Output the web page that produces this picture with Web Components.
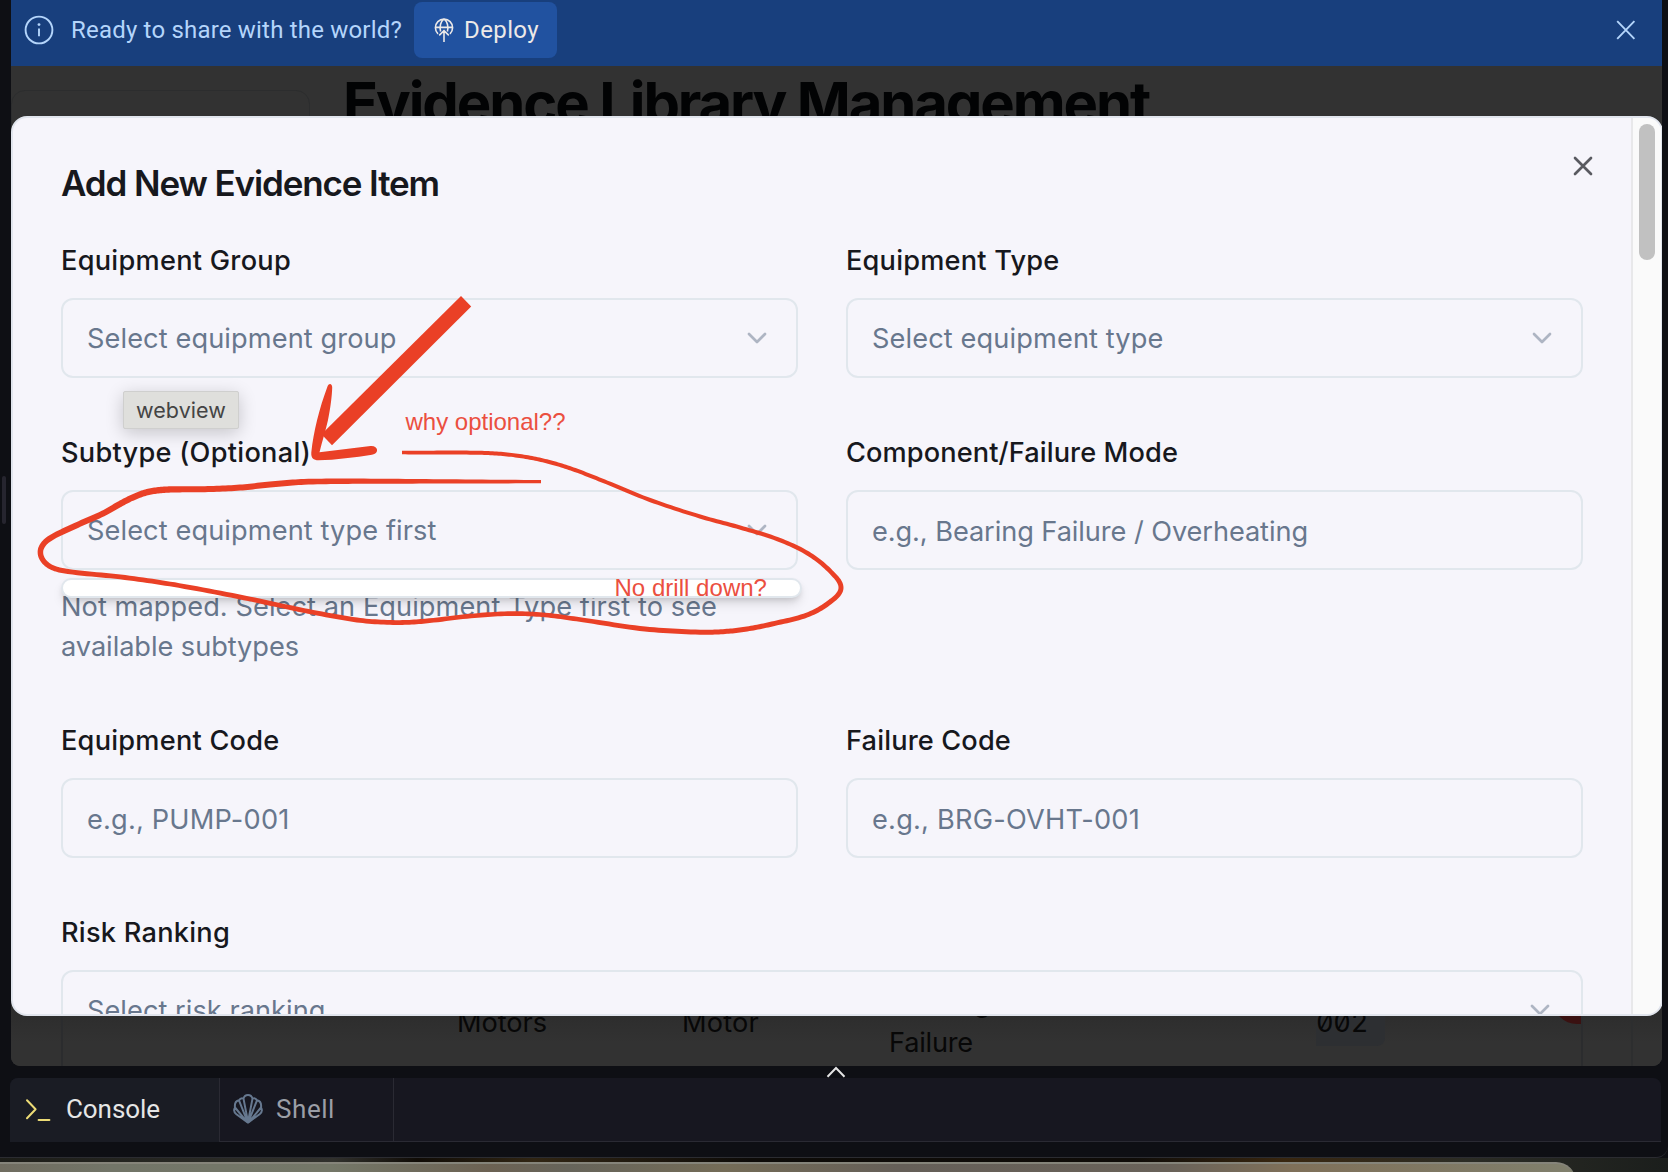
<!DOCTYPE html>
<html lang="en">
<head>
<meta charset="utf-8">
<title>Evidence Library Management</title>
<style>
  html, body { margin: 0; height: 100%; overflow: hidden; background: #0e0f14; }
  body { font-family: Inter, "Liberation Sans", sans-serif; }
</style>
</head>
<body>
<ide-window></ide-window>
<script>
function define(name, html, setup) {
  customElements.define(name, class extends HTMLElement {
    connectedCallback() {
      if (this.shadowRoot) return;
      const root = this.attachShadow({ mode: 'open' });
      const t = document.createElement('template');
      t.innerHTML = html;
      root.append(t.content.cloneNode(true));
      if (setup) setup.call(this, root);
    }
  });
}

/* One line of text whose tracking is adjusted to a given width. */
define('fit-text', `<style>:host{display:inline-block;white-space:nowrap}span{display:inline-block;white-space:pre}</style><span><slot></slot></span>`,
  function (root) {
    const s = root.querySelector('span');
    const n = this.textContent.length;
    const w = s.getBoundingClientRect().width;
    const target = +this.getAttribute('w');
    if (target && w) {
      s.style.letterSpacing = ((target - w) / n).toFixed(3) + 'px';
    }
  });

define('deploy-banner', `
<style>
  :host{display:flex;flex:none;align-items:center;height:66px;box-sizing:border-box;padding:0 24px 6px 13px;margin:0 6px 0 11px;background:#183f7d;color:#b4d5fb;font:450 24px Roboto,"Noto Sans",sans-serif}
  svg{display:block;flex:none}
  .q{margin-left:17px}
  .btn{display:flex;align-items:center;box-sizing:border-box;width:143px;height:56px;margin-left:12px;padding-left:20px;gap:10px;border-radius:8px;background:#2152a0;color:#ece9e8}
  .x{margin-left:auto}
</style>
<svg width="30" height="30" viewBox="0 0 30 30" fill="none" stroke="currentColor" stroke-width="1.9"><circle cx="15" cy="15" r="13.4"/><path d="M15 13.6v7.6"/><circle cx="15" cy="9.6" r="1.4" fill="currentColor" stroke="none"/></svg>
<fit-text class="q" w="331">Ready to share with the world?</fit-text>
<div class="btn">
<svg width="20" height="26" viewBox="0 0 20 26" fill="none" stroke="currentColor" stroke-width="1.6"><path d="M4 16.9A8.6 8.6 0 1 1 16 16.9M1.3 10.4h17.4M6.6 14.4C5.2 9.8 6.6 4.6 10 1.9c3.4 2.7 4.8 7.9 3.4 12.5M10 25V13.8M5.2 18.4l4.8-4.8 4.8 4.8"/></svg>
<fit-text w="75">Deploy</fit-text></div>
<svg class="x" width="24" height="24" viewBox="0 0 24 24" fill="none" stroke="currentColor" stroke-width="1.9"><path d="M3.2 3.2l17.2 17.6M20.4 3.2L3.2 20.8"/></svg>`);

/* Dimmed application page behind the dialog. */
define('library-page', `
<style>
  :host{display:flex;flex-direction:column;justify-content:space-between;box-sizing:border-box;height:1000px;background:#323232;color:#070707;border-radius:0 0 9px 9px;overflow:hidden}
  .top{display:flex;height:60px;overflow:hidden}
  .side{box-sizing:border-box;width:299px;height:80px;margin-top:24px;border:1.5px solid #2c2d2e;border-radius:14px}
  h1{margin:0 0 0 33px;font:700 58px/72px Inter,sans-serif;color:#020304;padding-top:1px}
  .row{display:flex;height:80px;margin:0 48px 0 50px;width:1518px;border:solid #2b2c2e;border-width:0 2px;font-size:27.200px;line-height:40px;flex:none}
  .bottom{display:flex;background:linear-gradient(#282828,#323232 70%)}
  .edge{width:2px;background:#2d2e2f}
  .c1{width:225px;padding-left:394px;padding-top:17px}
  .c2{width:207px;padding-top:17px}
  .c3{width:427px;padding-top:0;margin-top:-3px}
  .c4{box-sizing:border-box;width:69px;height:60px;padding-top:17px;background:#2d2f32;border-radius:0 0 8px 0;font-feature-settings:"zero","tnum"}
  .c5{width:28px;height:38px;margin-left:auto;overflow:hidden}
  .c5 i{display:block;width:56px;height:38px;background:#3a1111;border-radius:0 0 24px 24px}
</style>
<div class="top"><div class="side"></div><h1><fit-text w="806">Evidence Library Management</fit-text></h1></div>
<div class="bottom">
<div class="row"><div class="c1"><fit-text w="90">Motors</fit-text></div><div class="c2"><fit-text w="77">Motor</fit-text></div><div class="c3"><fit-text w="102">Bearing</fit-text><br><fit-text w="84">Failure</fit-text></div><div class="c4"><fit-text w="52">002</fit-text></div><div class="c5"><i></i></div></div>
<div class="edge"></div></div>`);

define('form-field', `
<style>
  :host{display:block;font:27.200px/40px Inter,sans-serif;min-width:0}
  .label{font-weight:500;color:#17181d;height:40px;line-height:42px;margin-bottom:18px}
  .box{display:flex;align-items:center;justify-content:space-between;box-sizing:border-box;height:80px;padding:0 23px 0 24px;border:2px solid #e1e7ed;border-radius:12px;color:#68778d;line-height:42px}
  .box fit-text{padding-top:2px}
  :host(:not([select])) .box{padding-top:2px}
  :host(.wide) .box{padding-right:25px}
  svg{display:none;opacity:.5}
  :host([select]) svg{display:block}
</style>
<div class="label"><fit-text></fit-text></div>
<div class="box"><fit-text></fit-text><svg width="32" height="32" viewBox="0 0 24 24" fill="none" stroke="#68778d" stroke-width="2" stroke-linecap="round" stroke-linejoin="round"><path d="m6 9 6 6 6-6"/></svg></div>
<slot></slot>`, function (root) {
  for (const [sel, key] of [['.label', 'label'], ['.box', 'hint']]) {
    const old = root.querySelector(sel + ' fit-text');
    const el = document.createElement('fit-text');
    el.textContent = this.getAttribute(key);
    if (this.hasAttribute(key + '-w')) el.setAttribute('w', this.getAttribute(key + '-w'));
    old.replaceWith(el);
  }
});

define('evidence-dialog', `
<style>
  :host{display:flex;box-sizing:border-box;width:1652px;height:900px;border:2px solid #e1e5ed;border-radius:16px 16px 16px 16px;background:#f6f5fb;overflow:hidden}
  .body{position:relative;flex:1;box-sizing:border-box;padding:47px 48px 0;overflow:hidden}
  h2{margin:0 0 39px;font:600 35px/36px Inter,sans-serif;color:#17181d}
  .grid{display:grid;grid-template-columns:1fr 1fr;gap:54px 48px}
  .wide{grid-column:1/3}
  .help{margin-top:16px;color:#68778d;font:27.200px/42px Inter,sans-serif}
  .help div{height:40px}
  .close{position:absolute;right:32px;top:32px}
  .track{box-sizing:border-box;width:30px;padding:6px 0 0 6px;background:#fafafa;border-left:2px solid #e8e8ea}
  .thumb{width:16px;height:136px;border-radius:8px;background:#c1c1c1}
</style>
<div class="body">
<h2><fit-text w="378">Add New Evidence Item</fit-text></h2>
<div class="grid">
<form-field select label="Equipment Group" label-w="230" hint="Select equipment group" hint-w="309.500"></form-field>
<form-field select label="Equipment Type" label-w="213.500" hint="Select equipment type" hint-w="291.500"></form-field>
<form-field select label="Subtype (Optional)" label-w="250" hint="Select equipment type first" hint-w="349.500"><div class="help"><div><fit-text w="656">Not mapped. Select an Equipment Type first to see</fit-text></div><div><fit-text w="238">available subtypes</fit-text></div></div></form-field>
<form-field label="Component/Failure Mode" label-w="332" hint="e.g., Bearing Failure / Overheating" hint-w="436"></form-field>
<form-field label="Equipment Code" label-w="218.500" hint="e.g., PUMP-001" hint-w="202.500"></form-field>
<form-field label="Failure Code" label-w="165" hint="e.g., BRG-OVHT-001" hint-w="268"></form-field>
<form-field class="wide" select label="Risk Ranking" label-w="169" hint="Select risk ranking" hint-w="238.500"></form-field>
</div>
<svg class="close" width="32" height="32" viewBox="0 0 24 24" fill="none" stroke="#595a60" stroke-width="2" stroke-linecap="round"><path d="M18 6 6 18M6 6l12 12"/></svg>
</div>
<div class="track"><div class="thumb"></div></div>`);

define('console-tabs', `
<style>
  :host{display:flex;box-sizing:border-box;height:64px;margin:12px 7px 0 10px;border-radius:8px 8px 0 0;background:#171720;overflow:hidden;font:26px Roboto,"Noto Sans",sans-serif}
  div{display:flex;align-items:center;box-sizing:border-box;padding-bottom:3px;border-right:1px solid #2a2a33}
  svg{display:block;flex:none}
  .a{width:210px;padding-left:15px;background:#1a1c24;color:#e6e6e6;gap:14px;font-weight:450}
  .b{width:174px;padding-left:13px;padding-bottom:1px;color:#9b9ea6;gap:13px;border-bottom:1px solid #2a2a33}
  .c{flex:1;border-right:0;border-bottom:1px solid #2a2a33}
</style>
<div class="a"><svg width="27" height="24" viewBox="0 0 27 24" fill="none" stroke="#ecdb76" stroke-width="2" stroke-linecap="round" stroke-linejoin="round"><path d="M2 3.2l8.6 9L2 21.2M13.6 23h10.8"/></svg><fit-text w="94">Console</fit-text></div>
<div class="b"><svg width="30" height="30" viewBox="0 0 30 30" fill="none" stroke="#66788f" stroke-width="2" stroke-linejoin="round" stroke-linecap="round"><path d="M15 28.6L3.4 20.2C1.2 18.4.7 15.6 2 13.5c-.5-4 1.2-6.700 4-7.200C7.200 4.300 9 4 10.500 4.600 11.200 2.200 12.800 1 15 1s3.800 1.200 4.500 3.600C21 4 22.800 4.300 24 6.300c2.800.5 4.500 3.200 4 7.200 1.300 2.100.8 4.900-1.400 6.700zM2 13.500L14 28M6 6.300L14.600 28M10.500 4.600L15 28M28 13.500L16 28M24 6.300L15.400 28M19.500 4.600L15 28M9.500 23.200L15 28.600l5.500-5.400"/></svg><fit-text w="59">Shell</fit-text></div>
<div class="c"></div>`);

/* Freehand ink: each stroke is "x,y,width" samples, smoothed and filled as an outline. */
define('ink-layer', `
<style>:host{display:block;width:1668px;height:1172px}svg{display:block}</style>
<svg width="1668" height="1172" fill="#ea4026"><path d="M461 296L471.200 306.500 332 445.300 321.500 434.200z"/>
<path d="M327.300 387c1.100-4.400 5-4 4.900.5-.2 8-1.600 20-4.300 33-2.500 11-5.600 20.500-8.400 31.800l51-6.200c8-.6 9 7.700 1.500 8.600-17 2.500-36 5.300-53.500 5.600-5 0-7.600-2.300-7.200-7.800 2.200-21 8-44 16-65.500z"/></svg>`,
  function (root) {
    const svg = root.querySelector('svg');
    const strokes = [
      [[402,452.600,3.500],[440,452.600,4],[480,452.800,4],[505,454.200,4],[530,457.700,4],[552,462.700,4],[575,470,4],[607,482.500,4],[650,500,4],[700,516.500,4],[740,527.500,4.200],[777,539,4.200],[808,553.500,4.400],[831,572,4.600],[841,588,5],[830,602,5],[807,615,5],[772,624,5],[747,629,5],[725,631.500,5],[700,632.200,5],[645,629,5],[583,620,4.600],[545,615,4.600],[511,613.600,4.600],[471,616,4.600],[421,621.500,4.800],[393,622.500,4.800],[357,620,4.800],[304,610.500,4.800],[250,599,4.800],[179,585.500,4.800],[125,577.500,4.800],[68,571.500,5],[51,567,5.200],[42,558.500,5.400],[41,548.500,5.600],[49,539,5.800],[75,526,6],[103,513.500,6],[119,504.500,6.200],[132,497.800,6.200],[146,492.500,6.400],[161,490,6.400],[180,489.300,6.200],[205,489.200,6],[240,487.600,6],[270,484.500,6],[304,481.900,5.800],[357,481.200,5.200],[440,481.400,4.400],[541,481.700,3.200]]
    ];
    for (const p of strokes) {
      const L = [], R = [];
      const at = i => p[Math.max(0, Math.min(p.length - 1, i))];
      for (let i = 0; i < p.length - 1; i++) {
        const a = at(i - 1), b = at(i), c = at(i + 1), d = at(i + 2);
        const k = Math.hypot(c[0]-b[0], c[1]-b[1]);
        const unit = (u, v) => { const x = v[0]-u[0], y = v[1]-u[1], h = Math.hypot(x, y) || 1; return [x/h, y/h]; };
        const m0 = unit(a, c).map(v => v * k), m1 = unit(b, d).map(v => v * k);
        for (let s = 0; s <= 12; s++) {
          const t = s / 12, t2 = t*t, t3 = t2*t;
          const f = j => (2*t3-3*t2+1)*b[j] + (t3-2*t2+t)*m0[j] + (-2*t3+3*t2)*c[j] + (t3-t2)*m1[j];
          const g = j => (6*t2-6*t)*b[j] + (3*t2-4*t+1)*m0[j] + (-6*t2+6*t)*c[j] + (3*t2-2*t)*m1[j];
          const x = f(0), y = f(1), dx = g(0), dy = g(1), h = Math.hypot(dx, dy) || 1;
          const w = (b[2] + (c[2]-b[2]) * t) / 2;
          L.push([x - dy/h*w, y + dx/h*w]);
          R.unshift([x + dy/h*w, y - dx/h*w]);
        }
      }
      const path = document.createElementNS('http://www.w3.org/2000/svg', 'path');
      path.setAttribute('d', 'M' + L.concat(R).map(q => q[0].toFixed(2) + ' ' + q[1].toFixed(2)).join('L') + 'Z');
      svg.append(path);
    }
  });

define('ide-window', `
<style>
  :host{display:flex;flex-direction:column;position:relative;width:1668px;height:1172px;overflow:hidden;background:#0e0f14}
  .view{position:relative;height:1000px;margin:0 6px 0 11px;flex:none}
  evidence-dialog{position:absolute;left:0;top:50px}
  .clip{position:absolute;inset:0;overflow:hidden;border-radius:0 0 9px 9px}
  .dock{display:flow-root;box-sizing:border-box;flex:none;height:92px;border-bottom:1px solid #2b2c31;border-radius:0 0 12px 0}
  .desk{flex:1;padding-top:4px;background:linear-gradient(90deg,#1c1d18,#30302c 20%,#100c06 25%,#302513 32%,#0d0b08 45%,#0f0c08 68%,#38260f 77%,#2b2c25 88%,#1b1e1c)}
  .pane{height:20px;width:1576px;box-sizing:border-box;border-top:2px solid #85847a;border-radius:0 34px 0 0;background:linear-gradient(90deg,#706d60,#727568 7%,#747768 21%,#6c6253 31%,#66645a 36%,#746c57 46%,#655f58 57%,#696259 74%,#7f7059 82%,#80806d)}
  .handle{position:absolute;left:2px;top:476px;width:4px;height:48px;border-radius:2px;background:#26252f}
  .up{position:absolute;left:826px;top:1066px}
  .menu{position:absolute;left:61px;top:578px;box-sizing:border-box;width:741px;height:20px;border:2px solid #e1e7ed;border-radius:10px;background:#fff;box-shadow:0 7px 12px -2px #0002,0 3px 6px -2px #0002}
  .tip{position:absolute;left:123px;top:391px;display:flex;align-items:center;justify-content:center;box-sizing:border-box;width:116px;height:38px;background:#dfdfdc;border:1px solid #cfcfce;border-radius:2px;box-shadow:0 4px 18px #0003;color:#444;font:21.500px Inter,sans-serif}
  ink-layer{position:absolute;left:0;top:0}
  .note{position:absolute;font:24px/28px "Liberation Sans",sans-serif;color:#eb4f40}
</style>
<deploy-banner></deploy-banner>
<div class="view"><library-page></library-page><div class="clip"><evidence-dialog></evidence-dialog></div></div>
<div class="dock"><console-tabs></console-tabs></div>
<div class="desk"><div class="pane"></div></div>
<div class="handle"></div>
<svg class="up" width="20" height="12" viewBox="0 0 20 12" fill="none" stroke="#e4e4e4" stroke-width="2"><path d="M1.500 10.700L10 2l8.500 8.700"/></svg>
<div class="menu"></div>
<div class="tip"><fit-text w="90">webview</fit-text></div>
<ink-layer></ink-layer>
<div class="note" style="left:405.500px;top:408px"><fit-text w="160">why optional??</fit-text></div>
<div class="note" style="left:614.500px;top:574px"><fit-text w="152.500">No drill down?</fit-text></div>`);
</script>
</body>
</html>
